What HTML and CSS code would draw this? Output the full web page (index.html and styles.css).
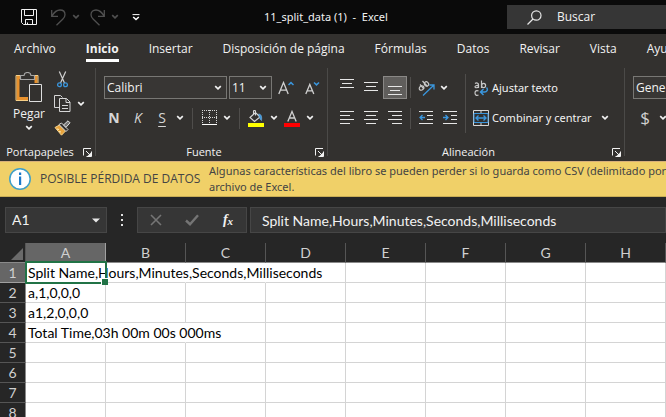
FILE: index.html
```html
<!DOCTYPE html>
<html lang="es">
<head>
<meta charset="utf-8">
<meta name="viewport" content="width=device-width, initial-scale=1">
<title>11_split_data (1) - Excel</title>
<link rel="stylesheet" href="styles.css">
</head>
<body>
<svg class="symbols" aria-hidden="true">
  <symbol id="chevron" viewBox="0 0 8 6"><path d="M1.2 1.2 4 3.8 6.8 1.2" fill="none" stroke="currentColor" stroke-width="1.7"/></symbol>
  <symbol id="launcher" viewBox="0 0 9 9"><path d="M.5 7.500V.5H8M3 3l4 4M8.500 3.500v5h-5" fill="none" stroke="currentColor"/><path d="M8 4.500V8H4.500z" fill="currentColor"/></symbol>
</svg>
<div class="app">
  <header class="titlebar">
    <div class="quick">
      <button class="tool" aria-label="Guardar"><svg width="16" height="16" viewBox="0 0 16 16" fill="none" stroke="#f2f2f2"><path d="M.5.5h15v15H2.500l-2-2zM3.500.5v6h9v-6M4.500 15.500v-5h7v5M6.500 15.500v-2"/></svg></button>
      <button class="tool dim" aria-label="Deshacer"><svg width="15" height="17" viewBox="0 0 15 17" fill="none" stroke="currentColor" stroke-width="1.300"><path d="M.7 1v6.300H7M1 7C3 3.500 6 1 9 1c3 0 5 2 5 4.700 0 2-1 3.300-2.300 4.600L5.500 16.300"/></svg></button>
      <button class="drop dim" aria-label="Opciones de deshacer"><svg width="8" height="6"><use href="#chevron"/></svg></button>
      <button class="tool dim" aria-label="Rehacer"><svg width="15" height="17" viewBox="0 0 15 17" fill="none" stroke="currentColor" stroke-width="1.300"><path d="M14.300 1v6.300H8M14 7C12 3.500 9 1 6 1 3 1 1 3 1 5.700c0 2 1 3.300 2.300 4.600l6.200 6"/></svg></button>
      <button class="drop dim" aria-label="Opciones de rehacer"><svg width="8" height="6"><use href="#chevron"/></svg></button>
      <button class="tool" aria-label="Personalizar"><svg width="8" height="7" viewBox="0 0 8 7" fill="none" stroke="#fff"><path d="M.5.6h7"/><path d="M1.200 3 4 5.600 6.800 3" stroke-width="1.500"/></svg></button>
    </div>
    <h1 class="title">11_split_data (1) &nbsp;-&nbsp; Excel</h1>
    <label class="search">
      <svg width="15" height="15" viewBox="0 0 15 15" fill="none" stroke="#e6e6e6" stroke-width="1.200"><circle cx="9.300" cy="5.500" r="4.700"/><path d="M6 9 .5 14.500"/></svg>
      <input type="text" placeholder="Buscar" aria-label="Buscar">
    </label>
  </header>

  <nav class="tabs">
    <a href="#archivo">Archivo</a>
    <a href="#inicio" class="active">Inicio</a>
    <a href="#insertar">Insertar</a>
    <a href="#pagina">Disposición de página</a>
    <a href="#formulas">Fórmulas</a>
    <a href="#datos">Datos</a>
    <a href="#revisar">Revisar</a>
    <a href="#vista">Vista</a>
    <a href="#ayuda">Ayuda</a>
  </nav>

  <div class="ribbon">
    <section class="group clipboard">
      <div class="clip-body">
        <button class="paste">
          <svg width="28" height="31" viewBox="0 0 28 31" fill="none"><path d="M3 5.500h18v21H3z" stroke="#e8912d" stroke-width="3"/><path d="M1 3.500h22v25H1z" stroke="#f6cf87"/><path d="M5.500 7.500v-4H9c.5-4 6.500-4 7 0h3.500v4z" fill="#33312f" stroke="#a5a5a5" stroke-width="1.200"/><path d="M14.500 12.500h13v17h-13z" fill="#33312f" stroke="#33312f" stroke-width="3"/><path d="M14.500 12.500h12v17h-12z" fill="#33312f" stroke="#dedede"/></svg>
          <span>Pegar</span>
          <svg width="8" height="6"><use href="#chevron"/></svg>
        </button>
        <div class="clip-tools">
          <button class="tool" aria-label="Cortar"><svg width="11" height="17" viewBox="0 0 11 17" fill="none"><path d="M2.300.5 7.500 12M8.700.5 3.500 12" stroke="#d0d0d0" stroke-width="1.200"/><circle cx="2.500" cy="13.800" r="1.900" stroke="#3a96dd" stroke-width="1.300"/><circle cx="8.500" cy="13.800" r="1.900" stroke="#3a96dd" stroke-width="1.300"/></svg></button>
          <button class="tool" aria-label="Copiar"><svg width="17" height="17" viewBox="0 0 17 17" fill="none" stroke="#d6d6d6"><path d="M5 12.500H.5V.5h6l2 2"/><path d="M5.500 3.500h7l3.500 3.500v9.500H5.500zM12 3.500V7.500h4M8 10.500h6M8 13.500h6"/></svg></button>
          <button class="drop" aria-label="Opciones de copia"><svg width="8" height="6"><use href="#chevron"/></svg></button>
          <button class="tool" aria-label="Copiar formato"><svg width="17" height="16" viewBox="0 0 17 16" fill="none"><path d="M1 7.500 5.500 5l6 6-4 4.200z" fill="#e8a33d" stroke="#f6d38b"/><path d="m3 9 2 .5M5 11.500l2 .5" stroke="#fff0c0"/><path d="M5 4.500 7.500 3l6.500 6.500-2 2z" fill="#33312f" stroke="#d6d6d6"/><path d="M9.500 5 14 .8l2 2-4 4.500z" fill="#777" stroke="#e0e0e0"/></svg></button>
        </div>
      </div>
      <footer><span>Portapapeles</span><button class="launch" aria-label="Más opciones de portapapeles"><svg width="9" height="9"><use href="#launcher"/></svg></button></footer>
    </section>

    <section class="group font">
      <div class="rows">
        <div class="row fields">
          <label class="select name"><select aria-label="Fuente"><option>Calibri</option></select><svg width="8" height="6"><use href="#chevron"/></svg></label>
          <label class="select size"><select aria-label="Tamaño"><option>11</option></select><svg width="8" height="6"><use href="#chevron"/></svg></label>
          <button class="tool" aria-label="Aumentar tamaño"><svg width="16" height="14" viewBox="0 0 16 14" fill="none"><path d="M.8 13 5.500 1.500 10.200 13M2.400 9.200h6.200" stroke="#d0d0d0" stroke-width="1.300"/><path d="m10.500 4 2.500-2.400L15.500 4" stroke="#3a96dd" stroke-width="1.500"/></svg></button>
          <button class="tool" aria-label="Reducir tamaño"><svg width="15" height="14" viewBox="0 0 15 14" fill="none"><path d="M.8 13 4.800 3.500 8.800 13M2.200 9.800h5.200" stroke="#d0d0d0" stroke-width="1.300"/><path d="m9 1.500 2.500 2.400L14 1.500" stroke="#3a96dd" stroke-width="1.500"/></svg></button>
        </div>
        <div class="row">
          <button class="tool letter bold" aria-label="Negrita">N</button>
          <button class="tool letter italic" aria-label="Cursiva">K</button>
          <button class="tool letter underline" aria-label="Subrayado">S</button>
          <button class="drop" aria-label="Opciones de subrayado"><svg width="8" height="6"><use href="#chevron"/></svg></button>
          <i class="sep wide"></i>
          <button class="tool" aria-label="Bordes"><svg width="15" height="16" viewBox="0 0 15 16" fill="none" stroke="#d6d6d6"><path d="M0 .5h15M0 7.500h15M.5 0v14M7.500 0v14M14.500 0v14" stroke-dasharray="1 1"/><path d="M0 14.500h15" stroke="#fff"/></svg></button>
          <button class="drop" aria-label="Opciones de bordes"><svg width="8" height="6"><use href="#chevron"/></svg></button>
          <i class="sep wide"></i>
          <button class="tool" aria-label="Color de relleno"><svg width="16" height="17" viewBox="0 0 16 17" fill="none"><path d="M2 7.500 7.500 2.500l4.500 4.500-5.500 4.500zM7.500 5.500V1.500c0-1.500-2-1.500-2 0V4" stroke="#d6d6d6" stroke-width="1.100"/><path d="M10.500 4c3 0 3.500 3 3 6.500-2-1-2-4-3-6.500z" fill="#3a96dd" stroke="#7dbbe8" stroke-width=".6"/><path d="M0 13h16v4H0z" fill="#ff0"/></svg></button>
          <button class="drop" aria-label="Opciones de relleno"><svg width="8" height="6"><use href="#chevron"/></svg></button>
          <button class="tool" aria-label="Color de fuente"><svg width="16" height="17" viewBox="0 0 16 17" fill="none"><path d="M3.800 11.500 8 1.500l4.200 10M5.300 8h5.400" stroke="#d0d0d0" stroke-width="1.300"/><path d="M0 13h16v4H0z" fill="red"/></svg></button>
          <button class="drop" aria-label="Opciones de color"><svg width="8" height="6"><use href="#chevron"/></svg></button>
        </div>
      </div>
      <footer><span>Fuente</span><button class="launch" aria-label="Más opciones de fuente"><svg width="9" height="9"><use href="#launcher"/></svg></button></footer>
    </section>

    <section class="group align">
      <div class="align-body">
        <div class="rows">
          <div class="row">
            <button class="tool" aria-label="Alinear arriba"><svg width="14" height="17" viewBox="0 0 14 17" stroke="#e6e6e6"><path d="M0 .5h14M2 4.500h10M0 8.500h14"/></svg></button>
            <button class="tool" aria-label="Alinear al medio"><svg width="14" height="17" viewBox="0 0 14 17" stroke="#e6e6e6"><path d="M0 3.500h14M2 7.500h10M0 11.500h14"/></svg></button>
            <button class="tool pressed" aria-label="Alinear abajo"><svg width="14" height="17" viewBox="0 0 14 17" stroke="#e6e6e6"><path d="M0 7.500h14M2 11.500h10M0 15.500h14"/></svg></button>
            <i class="sep"></i>
            <button class="tool" aria-label="Orientación"><svg width="17" height="16" viewBox="0 0 17 16" fill="none"><g stroke="#c8c8c8" stroke-width="1.200"><ellipse cx="3.500" cy="8" rx="2.500" ry="2" transform="rotate(-45 3.500 8)"/><path d="M2 4.500 6 9M4.500 1l5 5.500"/><ellipse cx="8.500" cy="4" rx="2" ry="2.300" transform="rotate(-45 8.500 4)"/></g><path d="m5 15.500 11-10.500M11.500 5H16v4.500" stroke="#3a96dd" stroke-width="1.300"/></svg></button>
            <button class="drop" aria-label="Opciones de orientación"><svg width="8" height="6"><use href="#chevron"/></svg></button>
          </div>
          <div class="row">
            <button class="tool" aria-label="Alinear a la izquierda"><svg width="14" height="14" viewBox="0 0 14 14" stroke="#e6e6e6"><path d="M0 .5h14M0 4.500h10M0 8.500h14M0 12.500h10"/></svg></button>
            <button class="tool" aria-label="Centrar"><svg width="14" height="14" viewBox="0 0 14 14" stroke="#e6e6e6"><path d="M0 .5h14M2 4.500h10M0 8.500h14M2 12.500h10"/></svg></button>
            <button class="tool" aria-label="Alinear a la derecha"><svg width="14" height="14" viewBox="0 0 14 14" stroke="#e6e6e6"><path d="M0 .5h14M4 4.500h10M0 8.500h14M4 12.500h10"/></svg></button>
            <i class="sep"></i>
            <button class="tool" aria-label="Disminuir sangría"><svg width="14" height="14" viewBox="0 0 14 14" fill="none" stroke="#e6e6e6"><path d="M0 .5h14M8 4.500h6M8 8.500h6M0 12.500h14"/><path d="M6 6.500H1M3.500 4 1 6.500 3.500 9" stroke="#3a96dd" stroke-width="1.300"/></svg></button>
            <button class="tool" aria-label="Aumentar sangría"><svg width="14" height="14" viewBox="0 0 14 14" fill="none" stroke="#e6e6e6"><path d="M0 .5h14M8 4.500h6M8 8.500h6M0 12.500h14"/><path d="M0 6.500h5M2.500 4 5 6.500 2.500 9" stroke="#3a96dd" stroke-width="1.300"/></svg></button>
          </div>
        </div>
        <i class="sep tall"></i>
        <div class="rows">
          <button class="row command"><svg width="16" height="16" viewBox="0 0 16 16" fill="none" stroke-width="1.200"><g stroke="#c8c8c8"><path d="M2 3.500c1.500-1 3.500-.5 3.500 1V8M5.500 5.500C3.500 5.300 2 5.800 2 6.800 2 8.200 5 8 5.500 6.500M8.500.5V8"/><ellipse cx="10.600" cy="5.500" rx="2" ry="2.200"/><path d="M5.500 11c-2-1-3.500 0-3.500 2s1.500 3 3.500 2"/></g><path d="M13.500 7.500c2 2 .5 4.500-2 4.500H8M10.500 9 7.500 12l3 3" stroke="#3a96dd" stroke-width="1.500"/></svg><span>Ajustar texto</span></button>
          <button class="row command"><svg width="16" height="16" viewBox="0 0 16 16" fill="none"><path d="M.5.5h15v15H.5zM8 0v4M8 12v4" stroke="#d6d6d6"/><path d="M1 3.500h14v9H1z" fill="#33312f" stroke="#3a96dd"/><path d="M3 8h10M5.500 5.500 3 8l2.500 2.500M10.500 5.500 13 8l-2.500 2.500" stroke="#3a96dd" stroke-width="1.400"/></svg><span>Combinar y centrar</span><svg width="8" height="6"><use href="#chevron"/></svg></button>
        </div>
      </div>
      <footer><span>Alineación</span><button class="launch" aria-label="Más opciones de alineación"><svg width="9" height="9"><use href="#launcher"/></svg></button></footer>
    </section>

    <section class="group number">
      <div class="rows">
        <div class="row"><label class="select"><select aria-label="Formato de número"><option>General</option></select></label></div>
        <div class="row"><button class="tool currency" aria-label="Formato de moneda">$</button><button class="drop" aria-label="Opciones de moneda"><svg width="8" height="6"><use href="#chevron"/></svg></button></div>
      </div>
    </section>
  </div>

  <div class="notice" role="status">
    <svg width="22" height="22" viewBox="0 0 22 22"><circle cx="11" cy="11" r="10.200" fill="#fff" stroke="#3f9fc9" stroke-width="1.500"/><path d="M10 4.500h2.200V7H10zM10 8.500h2.200V17H10z" fill="#1979ca"/></svg>
    <strong>POSIBLE PÉRDIDA DE DATOS</strong>
    <p>Algunas características del libro se pueden perder si lo guarda como CSV (delimitado por comas).<br>archivo de Excel.</p>
  </div>

  <div class="formula-bar">
    <div class="box name-box"><input type="text" value="A1" aria-label="Cuadro de nombres"><button aria-label="Ver nombres"><svg width="8" height="5" viewBox="0 0 8 5"><path d="M0 .5h8L4 4.500z" fill="#e8e8e8"/></svg></button></div>
    <svg class="dots" width="2" height="12" viewBox="0 0 2 12" fill="#e0e0e0"><path d="M0 0h2v2H0zM0 5h2v2H0zM0 10h2v2H0z"/></svg>
    <div class="box entry">
      <button aria-label="Cancelar"><svg width="12" height="12" viewBox="0 0 12 12" stroke="#757575" stroke-width="1.600"><path d="m1 1 10 10M11 1 1 11"/></svg></button>
      <button aria-label="Introducir"><svg width="14" height="12" viewBox="0 0 14 12" fill="none" stroke="#757575" stroke-width="2.400"><path d="m1 6.500 4 3.700L13 1.200"/></svg></button>
      <button class="fx" aria-label="Insertar función">f<sub>x</sub></button>
    </div>
    <input class="box formula" type="text" value="Split Name,Hours,Minutes,Seconds,Milliseconds" aria-label="Barra de fórmulas">
  </div>

  <main class="sheet">
    <table>
      <colgroup><col class="numbers"><col span="8"></colgroup>
      <thead>
        <tr><th class="corner"><svg width="12" height="12" viewBox="0 0 12 12"><path d="M12 0v12H0z" fill="#6a6a6a"/></svg></th><th class="current">A</th><th>B</th><th>C</th><th>D</th><th>E</th><th>F</th><th>G</th><th>H</th></tr>
      </thead>
      <tbody>
        <tr><th class="current">1</th><td class="spill selected">Split Name,Hours,Minutes,Seconds,Milliseconds</td><td class="spill"></td><td class="spill"></td><td></td><td></td><td></td><td></td><td></td></tr>
        <tr><th>2</th><td>a,1,0,0,0</td><td></td><td></td><td></td><td></td><td></td><td></td><td></td></tr>
        <tr><th>3</th><td>a1,2,0,0,0</td><td></td><td></td><td></td><td></td><td></td><td></td><td></td></tr>
        <tr><th>4</th><td class="spill">Total Time,03h 00m 00s 000ms</td><td class="spill"></td><td></td><td></td><td></td><td></td><td></td><td></td></tr>
        <tr><th>5</th><td></td><td></td><td></td><td></td><td></td><td></td><td></td><td></td></tr>
        <tr><th>6</th><td></td><td></td><td></td><td></td><td></td><td></td><td></td><td></td></tr>
        <tr><th>7</th><td></td><td></td><td></td><td></td><td></td><td></td><td></td><td></td></tr>
        <tr><th>8</th><td></td><td></td><td></td><td></td><td></td><td></td><td></td><td></td></tr>
      </tbody>
    </table>
  </main>
</div>
</body>
</html>
```
FILE: styles.css
```css
* { box-sizing: border-box; }

body {
  margin: 0;
  background: #262626;
  color: #f2f2f2;
  font: 12px/16px "Open Sans", "Noto Sans", sans-serif;
}

button, input, select {
  margin: 0;
  padding: 0;
  border: 0;
  background: none;
  color: inherit;
  font: inherit;
  appearance: none;
  outline: 0;
}

svg { display: block; flex: none; }
.symbols { position: absolute; width: 0; height: 0; }

.app {
  display: flex;
  flex-direction: column;
  height: 100vh;
  overflow: hidden;
}

.app > * { flex: none; }

/* Title bar */
.titlebar {
  display: flex;
  align-items: center;
  height: 34px;
  background: #0a0a0a;
}

.quick {
  display: flex;
  align-items: center;
  width: 264px;
  padding-left: 17px;
}

.tool, .drop {
  display: flex;
  flex: none;
  align-items: center;
  justify-content: center;
  width: 24px;
  height: 23px;
}

.drop { width: 12px; }
.dim { color: #505050; }
.quick .tool + .tool { margin-left: 5px; }
.quick .drop + .tool { margin-left: 3px; }

.title {
  width: 243px;
  margin: 0;
  font: 400 11px/16px "Noto Sans", sans-serif;
  white-space: nowrap;
}

.search {
  display: flex;
  flex: 1;
  align-items: center;
  gap: 15px;
  min-width: 0;
  height: 24px;
  padding-left: 20px;
  background: #363636;
}

.search input { flex: 1; min-width: 0; }
.search input::placeholder { color: #f2f2f2; opacity: 1; }

/* Tabs */
.tabs {
  display: flex;
  gap: 30px;
  height: 32px;
  padding: 7px 14px 0;
  overflow: hidden;
  background: #33312f;
  white-space: nowrap;
}

.tabs a {
  height: 21px;
  color: inherit;
  text-decoration: none;
}

.tabs .active {
  border-bottom: 3px solid #fff;
  font-weight: 700;
}

/* Ribbon */
.ribbon {
  display: flex;
  height: 95px;
  overflow: hidden;
  background: #33312f;
}

.group {
  display: grid;
  flex: none;
  grid-template-rows: 1fr 18px;
  padding: 10px 1px 0 0;
  background: linear-gradient(#4b4a48, #4b4a48) right 2px / 1px 88px no-repeat;
}

.group footer {
  display: flex;
  align-items: center;
  justify-content: center;
  font-size: 11px;
}

.group footer span { flex: 1; text-align: center; }
.launch { padding: 0 3px; }

.clipboard { width: 96px; }
.font { width: 232px; }
.align { width: 297px; }
.number { flex: 1; min-width: 0; background: none; }

.clip-body { display: flex; padding-left: 11px; gap: 3px; }

.paste {
  display: flex;
  flex-direction: column;
  align-items: center;
  gap: 3px;
  width: 36px;
  height: 60px;
  margin-top: -4px;
}

.clip-tools {
  display: grid;
  grid-template-columns: 24px 12px;
  grid-template-rows: 24px 24px 22px;
  gap: 0 1px;
  height: 70px;
  margin-top: -8px;
}

.clip-tools .tool:first-child { grid-column: 1 / 3; }

.rows { display: flex; flex-direction: column; gap: 7px; }
.row { display: flex; align-items: center; height: 24px; }
.row:first-child { height: 23px; }

.font .rows { padding-left: 6px; }
.fields { gap: 2px; padding-left: 2px; }

.select {
  display: flex;
  align-items: center;
  height: 23px;
  padding: 0 4px 0 2px;
  border: 1px solid #787774;
  background: #383634;
}

.select select { flex: 1; min-width: 0; height: 21px; }
.select.name { width: 123px; }
.select.size { width: 43px; }

.sep {
  width: 1px;
  height: 21px;
  margin: 0 3px;
  background: #4f4d4b;
}

.sep.wide { margin: 0 4px 0 6px; }
.sep.tall { height: 59px; margin-top: -2px; }

.letter { color: #d6d6d6; font-size: 14px; }
.bold { font-weight: 700; }
.italic { font-style: italic; }
.underline { text-decoration: underline; text-underline-offset: 3px; }

.align-body { display: flex; padding-left: 7px; }
.pressed { border: 1px solid #8a8886; background: #605e5c; }

.command {
  gap: 3px;
  padding-left: 4px;
  font: 11px/16px "Noto Sans", sans-serif;
  white-space: nowrap;
}

.command svg + span + svg { margin-left: 6px; }

.number .rows { padding-left: 8px; }
.number .select { width: 120px; }
.currency { color: #d0d0d0; font-size: 17px; }

/* Notice */
.notice {
  display: flex;
  align-items: center;
  gap: 9px;
  height: 36px;
  padding-left: 9px;
  overflow: hidden;
  border-top: 1px solid #d8b07a;
  border-bottom: 1px solid #c9ad55;
  background: #f0d068;
  color: #444;
  white-space: nowrap;
}

.notice strong { flex: none; width: 160px; font-weight: 400; }
.notice p { margin: 0; font: 11px/16px "Noto Sans", sans-serif; }

/* Formula bar */
.formula-bar {
  display: flex;
  align-items: center;
  height: 46px;
  padding-left: 5px;
  background: #262626;
  font: 14px/20px Lato, sans-serif;
}

.box {
  display: flex;
  align-items: center;
  height: 26px;
  border: 1px solid #464646;
  background: #363636;
}

.name-box { width: 102px; padding: 0 6px; }
.name-box input { flex: 1; min-width: 0; }
.dots { margin: 0 14px; }
.entry { width: 110px; justify-content: space-around; }
.entry button { display: flex; align-items: center; justify-content: center; width: 24px; height: 24px; }

.entry .fx {
  display: block;
  font: italic 700 14px/20px "Liberation Serif", serif;
}

.fx sub { font-size: 11px; line-height: 12px; vertical-align: -1px; }
.formula { flex: 1; min-width: 0; margin-left: 3px; padding-left: 11px; }

/* Sheet */
.sheet { background: #fff; color: #000; }

table {
  width: 100%;
  table-layout: fixed;
  border-collapse: separate;
  border-spacing: 0;
  font: 14px/18px Lato, sans-serif;
}

.numbers { width: 26px; }

th, td {
  height: 20px;
  padding: 0;
  border-right: 1px solid #d4d4d4;
  border-bottom: 1px solid #d4d4d4;
  white-space: nowrap;
}

td { padding-left: 2px; }

th {
  border-color: #555;
  background: #262626;
  color: #d0d0d0;
  font-weight: 400;
}

thead th { border-bottom-color: #8a8a8a; }
tbody th { border-right-color: #8a8a8a; }
th.current { background: #666; border-color: #a0a0a0; }
.corner svg { margin: 3px 2px 0 auto; }
.spill { border-right-color: transparent; }
.selected { position: relative; }

/* Selection frame and fill handle */
.selected::before {
  content: "";
  position: absolute;
  inset: -2px -2px -2px -1px;
  border: 2px solid #217346;
}

.selected::after {
  content: "";
  position: absolute;
  right: -3px;
  bottom: -3px;
  width: 6px;
  height: 6px;
  border: solid #fff;
  border-width: 1px 0 0 1px;
  background: #217346;
}
```
